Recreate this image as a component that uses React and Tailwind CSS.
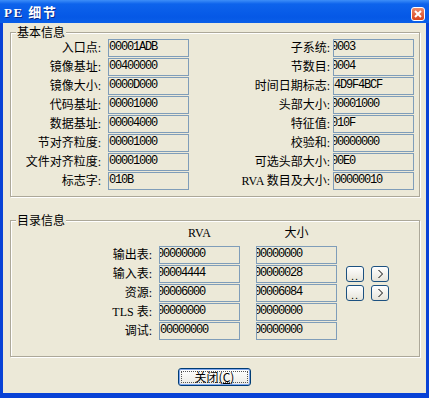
import React from "react";

const LABEL_FONT = "font-['Liberation_Serif','Noto_Sans_CJK_SC',serif]";

const Field = ({ v, clip }) => (
  <div className="w-[81px] h-[18px] shrink-0 border border-[#7f9db9] bg-[#ece9d8] overflow-hidden">
    <div
      className={`${clip ? "-ml-[3px]" : "ml-0"} pt-[1px] font-['Liberation_Mono',monospace] text-[12px] leading-[13px] tracking-[-1.2px] text-black whitespace-nowrap`}
    >
      {v}
    </div>
  </div>
);

const Row = ({ label, value, clip, labelW, gap }) => (
  <div className="flex items-center h-[18px]">
    <div
      className={`${labelW} ${LABEL_FONT} text-[12px] leading-[14px] text-right whitespace-nowrap text-black`}
    >
      {label}:
    </div>
    <div className={gap}>
      <Field v={value} clip={clip} />
    </div>
  </div>
);

const SmallBtn = ({ children }) => (
  <div className="w-[18px] h-[16px] rounded-[3px] border border-[#1c5180] bg-[linear-gradient(to_bottom,#ffffff,#e6e4da)] flex items-center justify-center font-['Liberation_Sans',sans-serif] text-[11px] leading-[11px] text-black">
    {children}
  </div>
);

const GroupBox = ({ title, className, children }) => (
  <div
    className={`relative border border-[#aca899] shadow-[1px_1px_0_#ffffff,inset_1px_1px_0_#ffffff] ${className}`}
  >
    <span className="absolute -top-[8px] left-[5px] px-[1px] bg-[#ece9d8] font-['Noto_Sans_CJK_SC',sans-serif] text-[12px] leading-[14px] text-black">
      {title}
    </span>
    {children}
  </div>
);

const leftRows = [
  ["入口点", "00001ADB"],
  ["镜像基址", "00400000"],
  ["镜像大小", "0000D000"],
  ["代码基址", "00001000"],
  ["数据基址", "00004000"],
  ["节对齐粒度", "00001000"],
  ["文件对齐粒度", "00001000"],
  ["标志字", "010B"],
];

const rightRows = [
  ["子系统", "0003", true],
  ["节数目", "0004", true],
  ["时间日期标志", "4D9F4BCF", false],
  ["头部大小", "00001000", true],
  ["特征值", "010F", true],
  ["校验和", "00000000", true],
  ["可选头部大小", "00E0", true],
  ["RVA 数目及大小", "00000010", false],
];

const dirRows = [
  ["输出表", "00000000", true, "00000000", true, false],
  ["输入表", "00004444", true, "00000028", true, true],
  ["资源", "00006000", true, "00006084", true, true],
  ["TLS 表", "00000000", true, "00000000", true, false],
  ["调试", "00000000", false, "00000000", true, false],
];

export default function App() {
  return (
    <div className="w-[429px] h-[398px] flex flex-col overflow-hidden bg-[#0a3fd6]">
      {/* Title bar */}
      <div className="h-[23px] shrink-0 flex items-center justify-between pl-[4px] pr-[4px] bg-[linear-gradient(to_bottom,#3d8ef8_0px,#0d63ec_4px,#0558e6_17px,#0a5fe8_23px)]">
        <span className="font-['Liberation_Serif','Noto_Sans_CJK_SC',serif] font-bold text-[13px] leading-[14px] tracking-[1.5px] text-white [text-shadow:1px_1px_0_#0a2a8a] mt-[2px]">
          PE 细节
        </span>
        <div className="w-[14px] h-[14px] mt-[4px] rounded-[3px] border border-white bg-[linear-gradient(to_bottom,#ec8a6a,#d8431c)] flex items-center justify-center">
          <svg width="8" height="8" viewBox="0 0 8 8">
            <path d="M1 1 L7 7 M7 1 L1 7" stroke="white" strokeWidth="2" />
          </svg>
        </div>
      </div>

      {/* Frame + client area */}
      <div className="flex-1 flex border-l-[3px] border-r-[3px] border-b-[5px] border-[#0842d6]">
        <div className="flex-1 flex flex-col bg-[#ece9d8] pt-[9px] pl-[7px]">
          <GroupBox title="基本信息" className="w-[410px] h-[165px]">
            <div className="flex pt-[6px]">
              <div className="flex flex-col gap-[1px]">
                {leftRows.map(([l, v]) => (
                  <Row key={l} label={l} value={v} labelW="w-[90px]" gap="ml-[7px]" />
                ))}
              </div>
              <div className="flex flex-col gap-[1px] ml-[41px]">
                {rightRows.map(([l, v, c]) => (
                  <Row key={l} label={l} value={v} clip={c} labelW="w-[100px]" gap="ml-[3px]" />
                ))}
              </div>
            </div>
          </GroupBox>

          <GroupBox title="目录信息" className="w-[410px] h-[137px] mt-[23px]">
            <div className="pt-[5px]">
              <div className="flex h-[14px] items-center">
                <div className="w-[148px]" />
                <div className={`w-[81px] text-center ${LABEL_FONT} text-[12px] leading-[14px]`}>RVA</div>
                <div className="w-[16px]" />
                <div className={`w-[81px] text-center ${LABEL_FONT} text-[12px] leading-[14px]`}>大小</div>
              </div>
              <div className="flex flex-col gap-[1px] mt-[6px]">
                {dirRows.map(([l, a, ca, b, cb, btns]) => (
                  <div key={l} className="flex items-center h-[18px]">
                    <div className={`w-[141px] ${LABEL_FONT} text-[12px] leading-[14px] text-right whitespace-nowrap`}>
                      {l}:
                    </div>
                    <div className="ml-[7px]">
                      <Field v={a} clip={ca} />
                    </div>
                    <div className="ml-[16px]">
                      <Field v={b} clip={cb} />
                    </div>
                    {btns && (
                      <div className="flex ml-[9px] gap-[7px]">
                        <SmallBtn>
                          <span className="mt-[5px] tracking-[1px]">..</span>
                        </SmallBtn>
                        <SmallBtn>
                          <svg width="7" height="10" viewBox="0 0 7 10">
                            <path d="M1.5 1 L5.5 5 L1.5 9" stroke="black" strokeWidth="1" fill="none" />
                          </svg>
                        </SmallBtn>
                      </div>
                    )}
                  </div>
                ))}
              </div>
            </div>
          </GroupBox>

          <div className="flex justify-center mt-[11px] pr-[7px]">
            <button className="w-[73px] h-[18px] rounded-[3px] border border-[#003c74] bg-[linear-gradient(to_bottom,#ffffff,#ecebe4)] shadow-[inset_0_0_0_1px_#7fa7ef] p-[2px] flex">
              <span className="flex-1 border border-dotted border-[#555] flex items-center justify-center font-['Noto_Sans_CJK_SC',sans-serif] text-[12px] leading-[12px] text-black">
                关闭(<span className="underline">C</span>)
              </span>
            </button>
          </div>
        </div>
      </div>
    </div>
  );
}
